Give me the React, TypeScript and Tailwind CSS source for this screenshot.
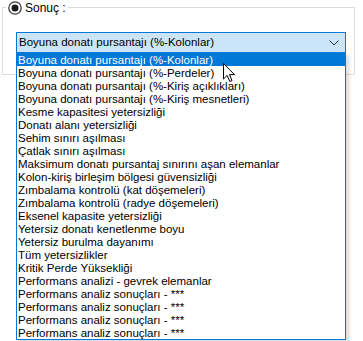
import React from "react";

const items = [
  "Boyuna donatı pursantajı (%-Kolonlar)",
  "Boyuna donatı pursantajı (%-Perdeler)",
  "Boyuna donatı pursantajı (%-Kiriş açıklıkları)",
  "Boyuna donatı pursantajı (%-Kiriş mesnetleri)",
  "Kesme kapasitesi yetersizliği",
  "Donatı alanı yetersizliği",
  "Sehim sınırı aşılması",
  "Çatlak sınırı aşılması",
  "Maksimum donatı pursantaj sınırını aşan elemanlar",
  "Kolon-kiriş birleşim bölgesi güvensizliği",
  "Zımbalama kontrolü (kat döşemeleri)",
  "Zımbalama kontrolü (radye döşemeleri)",
  "Eksenel kapasite yetersizliği",
  "Yetersiz donatı kenetlenme boyu",
  "Yetersiz burulma dayanımı",
  "Tüm yetersizlikler",
  "Kritik Perde Yüksekliği",
  "Performans analizi - gevrek elemanlar",
  "Performans analiz sonuçları - ***",
  "Performans analiz sonuçları - ***",
  "Performans analiz sonuçları - ***",
  "Performans analiz sonuçları - ***",
];

const App = () => {
  return (
    <div
      className="relative w-[363px] h-[341px] bg-white overflow-hidden text-black"
      style={{ fontFamily: '"Liberation Sans", Arial, sans-serif' }}
    >
      {/* group box */}
      <div className="ml-[2px] mt-[7px] w-[353px] h-[68px] border border-[#dcdcdc]">
        <div className="ml-[13px] mt-[24px] w-[330px] h-[21px] border border-[#0078d7] bg-[#cce4f7] flex items-center justify-between pl-[2px] pr-[6px]">
          <span className="text-[11.5px] leading-none">{items[0]}</span>
          <svg width="10" height="6" viewBox="0 0 10 6">
            <path d="M0.5 0.5 L5 5 L9.5 0.5" fill="none" stroke="#333" strokeWidth="1" />
          </svg>
        </div>
      </div>

      {/* legend */}
      <div className="absolute left-[6px] top-0 flex items-center gap-[3px] bg-white px-[2px]">
        <svg width="14" height="14" viewBox="0 0 14 14">
          <circle cx="7" cy="7" r="6.2" fill="white" stroke="#333" strokeWidth="1.2" />
          <circle cx="7" cy="7" r="3.5" fill="#1a1a1a" />
        </svg>
        <span className="text-[12px] leading-[16px]">Sonuç :</span>
      </div>

      {/* dropdown list */}
      <div className="absolute left-[16px] top-[52px] w-[330px] h-[288px] border border-[#0078d7] bg-white shadow-[3px_3px_4px_rgba(0,0,0,0.15)]">
        {items.map((t, i) => (
          <div
            key={i}
            className={`h-[13px] pl-[1px] text-[11.5px] leading-[14px] whitespace-nowrap ${
              i === 0 ? "bg-[#0078d7] text-white" : ""
            }`}
          >
            {t}
          </div>
        ))}
      </div>

      {/* mouse cursor */}
      <svg className="absolute left-[223px] top-[63px]" width="13" height="20" viewBox="0 0 13 20">
        <path
          d="M0.5 0.5 L0.5 16 L4.2 12.4 L6.8 18.5 L9 17.6 L6.5 11.6 L11.5 11.6 Z"
          fill="white"
          stroke="black"
          strokeWidth="1"
          strokeLinejoin="miter"
        />
      </svg>
    </div>
  );
};

export default App;
